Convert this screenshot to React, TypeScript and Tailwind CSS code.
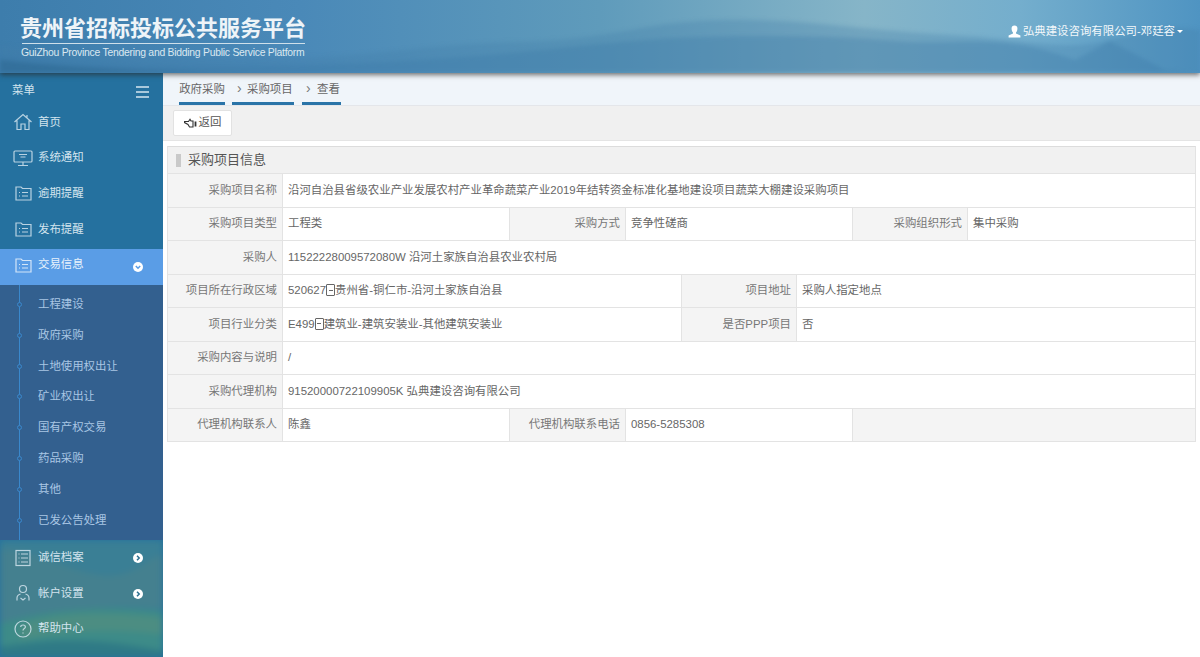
import React from "react";

const font = { fontFamily: '"Liberation Sans","Noto Sans CJK SC",sans-serif' };

function Ico({ children, size = 20 }: { children: React.ReactNode; size?: number }) {
  return (
    <svg width={size} height={size} viewBox="0 0 20 20" fill="none" stroke="currentColor" strokeWidth="1.2" className="shrink-0 opacity-85">
      {children}
    </svg>
  );
}
const HomeI = () => (
  <Ico><path d="M1.5 10 10 2.5 18.5 10M4 8.5V17.5H8V12H12V17.5H16V8.5M14 3V5.5" /></Ico>
);
const ScreenI = () => (
  <Ico><rect x="1" y="3" width="18" height="11" rx="1" /><path d="M10 14V17M5 17.5H15M6 6.5H14M7.5 9H12.5" /></Ico>
);
const FolderI = () => (
  <Ico><path d="M3 4H8L9.5 5.5H18V17H3Z" /><path d="M6 9.5H7M9 9.5H15M6 13H7M9 13H15" /></Ico>
);
const ListI = () => (
  <Ico><rect x="3" y="2.5" width="14" height="15" /><path d="M5.5 6H6.5M8 6H15M5.5 10H6.5M8 10H15M5.5 14H6.5M8 14H15" /></Ico>
);
const UserI = () => (
  <Ico><circle cx="10" cy="6" r="3.5" /><path d="M4 17.5V15C4 12.5 6 11.5 7.5 11M16 17.5V15C16 12.5 14 11.5 12.5 11M7.5 15 10 17 12.5 15" /></Ico>
);
const HelpI = () => (
  <Ico><circle cx="10" cy="10" r="8" /><path d="M7.7 8C7.7 5.3 12.4 5.3 12.4 8 12.4 9.6 10 9.6 10 11.6M10 13.4V14.6" /></Ico>
);

function Arrow({ down }: { down?: boolean }) {
  return (
    <svg width="10" height="10" viewBox="0 0 10 10" className="shrink-0">
      <circle cx="5" cy="5" r="5" fill="#fff" />
      <path d={down ? "M2.8 4 5 6.2 7.2 4" : "M4 2.8 6.2 5 4 7.2"} fill="none" stroke={down ? "#5a9de6" : "#2c6f8f"} strokeWidth="1.5" />
    </svg>
  );
}

function Menu({ icon, label, arrow, active }: { icon: React.ReactNode; label: string; arrow?: boolean; active?: boolean }) {
  return (
    <div className={`h-[35.6px] flex items-center pl-[13px] pr-[20px] pb-[5px] ${active ? "bg-[#5a9de6] text-[#e8f2fc]" : "text-[#d3e4ee]"}`}>
      <span className="w-[25px] flex">{icon}</span>
      <span className="text-[11.42px]">{label}</span>
      <span className="flex-1" />
      {arrow && <span className={active ? "mt-[5px]" : "mt-[1px]"}><Arrow down={active} /></span>}
    </div>
  );
}

function Tofu() {
  return <span className="inline-block w-[9px] h-[12px] border border-[#666] rounded-[1px] align-[-2px] bg-[linear-gradient(#666,#666)] bg-[length:4px_1px] bg-center bg-no-repeat" />;
}

function L({ w, children }: { w: string; children: React.ReactNode }) {
  return <div className={`${w} shrink-0 bg-[#f4f4f4] border-r border-[#e3e3e3] flex items-center justify-end pr-[5px] text-[#777]`}>{children}</div>;
}
function V({ w, children, end }: { w: string; children?: React.ReactNode; end?: boolean }) {
  return <div className={`${w} ${end ? "" : "border-r border-[#e3e3e3]"} bg-white flex items-center pl-[5px] text-[#666] whitespace-nowrap`}>{children}</div>;
}
function Row({ children }: { children: React.ReactNode }) {
  return <div className="h-[33.5px] flex border-b border-[#e3e3e3]">{children}</div>;
}

const subs = ["工程建设", "政府采购", "土地使用权出让", "矿业权出让", "国有产权交易", "药品采购", "其他", "已发公告处理"];

export default function App() {
  return (
    <div style={font} className="w-[1200px] h-[657px] overflow-hidden flex flex-col bg-white">
      <header className="relative h-[73px] shrink-0 z-10 shadow-[0_2px_5px_rgba(40,40,40,0.65)] bg-[linear-gradient(90deg,#3d7dac_0%,#4a89b8_25%,#5f9bbb_50%,#86b5c8_72%,#74aecd_85%,#4f94c2_100%)] text-white overflow-hidden">
        <svg className="absolute inset-0 blur-[2px]" width="1200" height="73" viewBox="0 0 1200 73" preserveAspectRatio="none">
          <path d="M0 45C80 55 200 62 300 58S420 45 520 42 640 22 720 20 860 30 950 35 1060 52 1110 40 1170 25 1200 30V73H0Z" fill="#437fa9" opacity=".3" />
          <path d="M0 55C120 68 260 70 420 60S620 36 760 36 880 44 950 42 1040 48 1075 60L1110 41 1165 70 1200 73H0Z" fill="#3a78a4" opacity=".3" />
          <path d="M0 60C100 72 260 74 330 73H0Z" fill="#2c6590" opacity=".5" />
        </svg>
        <div className="relative pl-[20px] pt-[16px] w-[330px]">
          <div className="text-[22px] leading-[26px] font-bold text-[#eef4f8] whitespace-nowrap">贵州省招标投标公共服务平台</div>
          <div className="w-[283px] ml-[2px] h-px bg-[#cfe0ea] mt-[1px]" />
          <div className="text-[10.4px] tracking-[-0.26px] leading-[13px] mt-[2px] ml-[1px] text-[#dbe8f0] whitespace-nowrap">GuiZhou Province Tendering and Bidding Public Service Platform</div>
        </div>
        <div className="absolute right-[17px] top-[23px] flex items-center text-[11.42px] text-[#f2f7fa]">
          <svg width="13" height="13" viewBox="0 0 13 13" fill="#fff" className="mr-[2px]"><path d="M6.5 0.5C8.6 0.5 9.6 2 9.4 4 9.3 5.6 8.6 7 8 7.6V8.6L12.4 10.6V12.5H.6V10.6L5 8.6V7.6C4.4 7 3.7 5.6 3.6 4 3.4 2 4.4 .5 6.5 .5Z" /></svg>
          <span>弘典建设咨询有限公司-邓廷容</span>
          <span className="w-0 h-0 ml-[2px] border-x-[3.5px] border-x-transparent border-t-[3.5px] border-t-white" />
        </div>
      </header>
      <div className="flex flex-1 min-h-0">
        <aside className="relative w-[163px] shrink-0 bg-[#25719f] overflow-hidden flex flex-col">
          <svg className="absolute left-0 top-[467px] blur-[3px]" width="163" height="117" viewBox="0 0 163 117" preserveAspectRatio="none">
            <rect x="-5" y="-5" width="173" height="127" fill="#3a7f95" />
            <path d="M-5 10C30 5 60 30 100 35S150 10 168 15V70C120 62 60 70 -5 90Z" fill="#44808f" />
            <path d="M-5 85C50 68 110 65 168 72V122H-5Z" fill="#3d8b88" />
            <path d="M20 85C60 70 120 72 168 78V95C110 88 70 90 20 100Z" fill="#578f7e" opacity=".6" />
            <path d="M-5 108C60 96 110 100 168 112V122H-5Z" fill="#2f7a86" />
          </svg>
          <div className="relative h-[34px] shrink-0 flex items-center pl-[12px] pr-[14px] text-[11.42px] text-[#d3e4ee]">
            <span className="flex-1 mt-[1px]">菜单</span>
            <span className="flex flex-col gap-[3px] mt-[3px]">
              <i className="block w-[13px] h-[2px] bg-[#a9c9dc]" /><i className="block w-[13px] h-[2px] bg-[#a9c9dc]" /><i className="block w-[13px] h-[2px] bg-[#a9c9dc]" />
            </span>
          </div>
          <div className="relative flex flex-col">
            <Menu icon={<HomeI />} label="首页" />
            <Menu icon={<ScreenI />} label="系统通知" />
            <Menu icon={<FolderI />} label="逾期提醒" />
            <Menu icon={<FolderI />} label="发布提醒" />
            <Menu icon={<FolderI />} label="交易信息" arrow active />
            <div className="relative h-[255.5px] bg-[#33608f] pt-[4px]">
              <div className="absolute left-[19px] top-0 bottom-0 w-px bg-[#3a88cc]" />
              {subs.map((s) => (
                <div key={s} className="relative h-[30.85px] flex items-center pl-[38px] text-[11.42px] text-[#a9c6e4]">
                  <span className="absolute left-[17px] w-[5px] h-[5px] rounded-full border border-[#3a88cc] bg-[#33608f]" />
                  {s}
                </div>
              ))}
            </div>
            <div className="pt-[2px]">
              <Menu icon={<ListI />} label="诚信档案" arrow />
              <Menu icon={<UserI />} label="帐户设置" arrow />
              <Menu icon={<HelpI />} label="帮助中心" />
            </div>
          </div>
        </aside>
        <main className="flex-1 min-w-0 flex flex-col text-[11.42px]">
          <nav className="h-[33px] shrink-0 bg-[#f0f5fa] border-b border-[#e4e6ea] flex items-end pl-[16px] text-[#666]">
            <span className="h-[32px] pt-[8px] border-b-[3px] border-[#2a74a8] w-[46px] text-center">政府采购</span>
            <span className="h-[32px] w-[7px]" />
            <span className="h-[32px] pt-[8px] border-b-[3px] border-[#2a74a8] w-[62px] whitespace-nowrap flex"><i className="w-[15px] not-italic text-[14px] leading-[14px] pl-[5px] text-[#777]">›</i>采购项目</span>
            <span className="h-[32px] w-[8px]" />
            <span className="h-[32px] pt-[8px] border-b-[3px] border-[#2a74a8] w-[39px] whitespace-nowrap flex"><i className="w-[15px] not-italic text-[14px] leading-[14px] pl-[4px] text-[#777]">›</i>查看</span>
          </nav>
          <div className="h-[35px] shrink-0 bg-[#f0f0f0] border-b border-[#e4e4e4] pl-[10px] pt-[4px]">
            <button className="h-[26px] w-[59px] bg-white border border-[#e2e2e2] rounded-[2px] flex items-center justify-center text-[#555]">
              <svg width="13" height="11" viewBox="0 0 13 11" fill="none" stroke="#333" strokeWidth="1.1" className="mr-[2px]">
                <path d="M.5 3.5H4.5L6 1.2 7 3H9V9H5.5L4 6.5 .5 4.6Z" />
                <path d="M11.5 3.5V8.5" strokeWidth="1.8" />
              </svg>
              返回
            </button>
          </div>
          <div className="flex-1 bg-white pt-[5px] pl-[4px]">
            <section className="w-[1029px] border border-[#e3e3e3] border-b-0 border-t-[#dcdcdc]">
              <div className="h-[27px] bg-[#f1f1f1] border-b border-[#e3e3e3] flex items-center pl-[8px] text-[13px] text-[#555]">
                <i className="w-[5px] h-[13px] bg-[#c9c9c9] mr-[7px]" />采购项目信息
              </div>
              <Row><L w="w-[115px]">采购项目名称</L><V w="flex-1" end>沿河自治县省级农业产业发展农村产业革命蔬菜产业2019年结转资金标准化基地建设项目蔬菜大棚建设采购项目</V></Row>
              <Row><L w="w-[115px]">采购项目类型</L><V w="w-[227px]">工程类</V><L w="w-[116px]">采购方式</L><V w="w-[227px]">竞争性磋商</V><L w="w-[115px]">采购组织形式</L><V w="flex-1" end>集中采购</V></Row>
              <Row><L w="w-[115px]">采购人</L><V w="flex-1" end>11522228009572080W 沿河土家族自治县农业农村局</V></Row>
              <Row><L w="w-[115px]">项目所在行政区域</L><V w="w-[399px]"><span>520627<Tofu />贵州省-铜仁市-沿河土家族自治县</span></V><L w="w-[115px]">项目地址</L><V w="flex-1" end>采购人指定地点</V></Row>
              <Row><L w="w-[115px]">项目行业分类</L><V w="w-[399px]"><span>E499<Tofu />建筑业-建筑安装业-其他建筑安装业</span></V><L w="w-[115px]">是否PPP项目</L><V w="flex-1" end>否</V></Row>
              <Row><L w="w-[115px]">采购内容与说明</L><V w="flex-1" end>/</V></Row>
              <Row><L w="w-[115px]">采购代理机构</L><V w="flex-1" end>91520000722109905K 弘典建设咨询有限公司</V></Row>
              <Row><L w="w-[115px]">代理机构联系人</L><V w="w-[227px]">陈鑫</V><L w="w-[116px]">代理机构联系电话</L><V w="w-[227px]">0856-5285308</V><div className="flex-1 bg-[#f4f4f4]" /></Row>
            </section>
          </div>
        </main>
      </div>
    </div>
  );
}
